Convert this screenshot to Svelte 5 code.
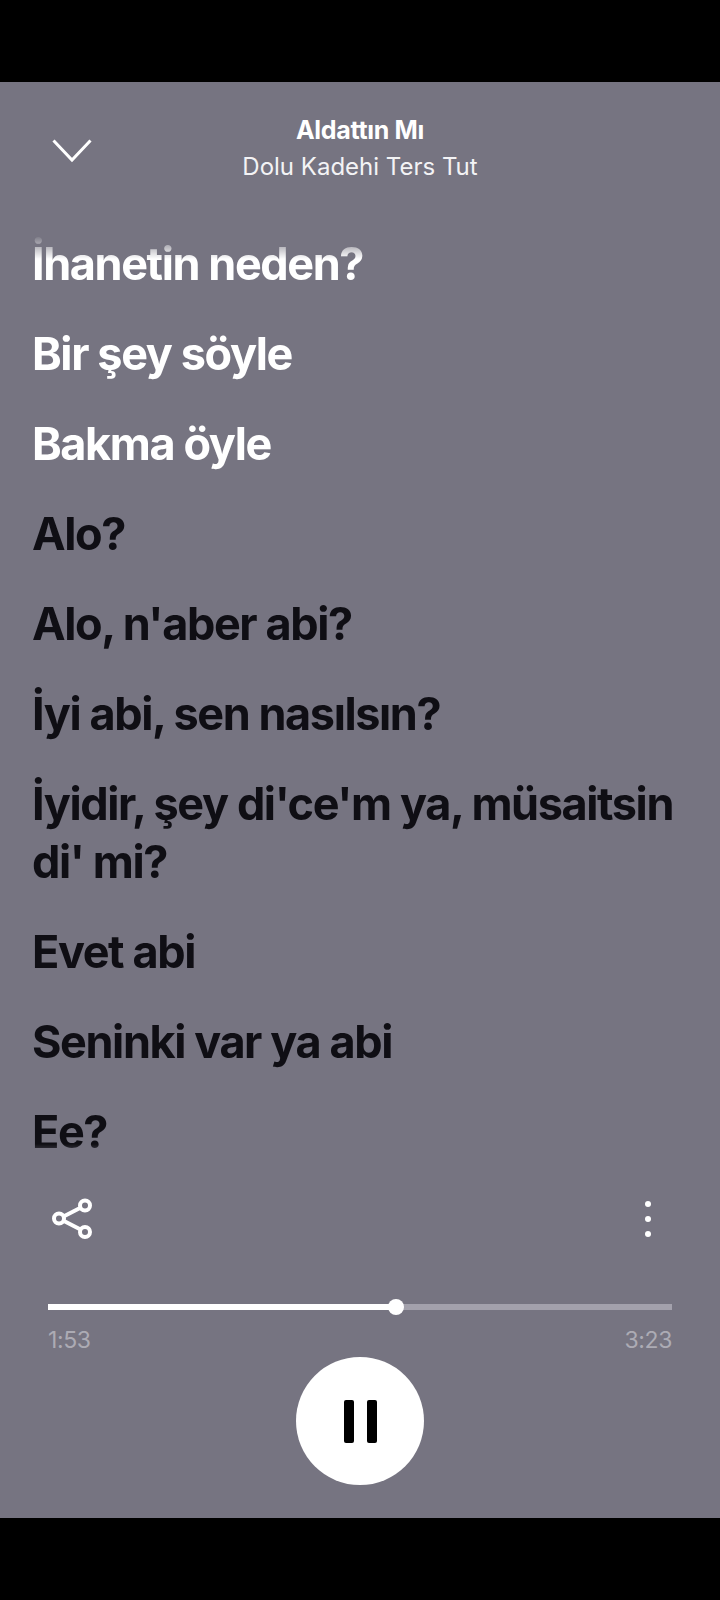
<script>
  const lyrics = [
    { text: 'İhanetin neden?', sung: true },
    { text: 'Bir şey söyle', sung: true },
    { text: 'Bakma öyle', sung: true },
    { text: 'Alo?' },
    { text: "Alo, n'aber abi?" },
    { text: 'İyi abi, sen nasılsın?' },
    { text: "İyidir, şey di'ce'm ya, müsaitsin di' mi?" },
    { text: 'Evet abi' },
    { text: 'Seninki var ya abi' },
    { text: 'Ee?' }
  ];
  const progress = 55.7;
</script>

<div class="screen">
  <div class="player">
    <header class="top">
      <svg class="chevron" width="40" height="24" viewBox="0 0 40 24" fill="none">
        <path d="M1.5 1.5 L20 21 L38.5 1.5" stroke="#fff" stroke-width="3" />
      </svg>
      <div class="title">
        <div class="song">Aldattın Mı</div>
        <div class="artist">Dolu Kadehi Ters Tut</div>
      </div>
    </header>

    <div class="lyrics">
      {#each lyrics as line}
        <p class:sung={line.sung}>{line.text}</p>
      {/each}
    </div>

    <div class="actions">
      <svg width="42" height="42" viewBox="0 0 42 42" fill="none" stroke="#fff" stroke-width="4">
        <circle cx="34" cy="7.5" r="5" />
        <circle cx="8" cy="20.5" r="5" />
        <circle cx="34" cy="34" r="5" />
        <path d="M13 18.2 L29.5 9.8 M13 22.9 L29.5 31.6" />
      </svg>
      <div class="more"><span></span><span></span><span></span></div>
    </div>

    <div class="seek">
      <div class="track">
        <div class="fill" style="width: {progress}%"></div>
        <div class="knob"></div>
      </div>
      <div class="times"><span>1:53</span><span>3:23</span></div>
    </div>

    <div class="controls">
      <button aria-label="Pause"><span></span><span></span></button>
    </div>
  </div>
</div>

<style>
  :global(body) {
    margin: 0;
    background: #000;
  }

  .screen {
    height: 1600px;
    padding-top: 82px;
    box-sizing: border-box;
    background: #000;
    font-family: Inter, "Liberation Sans", sans-serif;
  }

  .player {
    height: 1436px;
    background: #767481;
    display: flex;
    flex-direction: column;
  }

  .top {
    display: flex;
    justify-content: center;
    position: relative;
    padding-top: 33px;
    height: 120px;
    box-sizing: content-box;
  }

  .chevron {
    position: absolute;
    left: 52px;
    top: 57px;
  }

  .title {
    text-align: center;
    color: #fff;
  }

  .song {
    font-size: 25px;
    font-weight: 700;
    line-height: 30px;
    letter-spacing: -0.3px;
  }

  .artist {
    font-size: 24px;
    font-weight: 400;
    line-height: 36px;
    margin-top: 4px;
    letter-spacing: 0;
    color: #f3f3f5;
  }

  .lyrics {
    padding: 0 32px;
    height: 925px;
    box-sizing: border-box;
    -webkit-mask-image: linear-gradient(to bottom, transparent 0, #000 24px, #000 calc(100% - 16px), transparent 100%);
    mask-image: linear-gradient(to bottom, transparent 0, #000 24px, #000 calc(100% - 16px), transparent 100%);
    overflow: hidden;
  }

  .lyrics p {
    margin: 0 0 32px;
    font-size: 45px;
    font-weight: 700;
    line-height: 58px;
    letter-spacing: -1.4px;
    color: #0f0e14;
  }

  .lyrics p.sung {
    color: #fff;
  }

  .actions {
    display: flex;
    justify-content: space-between;
    align-items: center;
    padding: 0 69px 0 51px;
    height: 42px;
    margin-top: 38px;
  }

  .more {
    display: flex;
    flex-direction: column;
    gap: 9px;
  }

  .more span {
    width: 6px;
    height: 6px;
    border-radius: 50%;
    background: #fff;
  }

  .seek {
    padding: 0 48px;
    margin-top: 64px;
  }

  .track {
    position: relative;
    height: 6px;
    background: #a3a1ac;
  }

  .fill {
    height: 100%;
    background: #fff;
  }

  .knob {
    position: absolute;
    left: calc(55.7% - 8px);
    top: -5px;
    width: 16px;
    height: 16px;
    border-radius: 50%;
    background: #fff;
  }

  .times {
    display: flex;
    justify-content: space-between;
    margin-top: 15px;
    font-size: 23px;
    line-height: 30px;
    color: #acabb4;
    letter-spacing: -0.4px;
  }

  .controls {
    display: flex;
    justify-content: center;
    margin-top: 2px;
  }

  button {
    width: 128px;
    height: 128px;
    border: 0;
    padding: 0;
    border-radius: 50%;
    background: #fff;
    display: flex;
    align-items: center;
    justify-content: center;
    gap: 13px;
  }

  button span {
    width: 10px;
    height: 43px;
    background: #000;
    border-radius: 2px;
  }
</style>
